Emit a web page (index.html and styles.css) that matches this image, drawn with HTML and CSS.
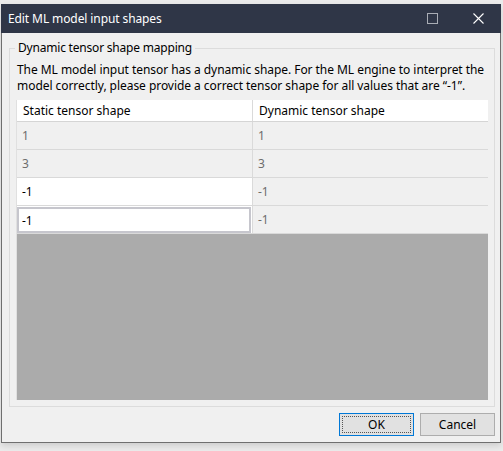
FILE: index.html
```html
<!DOCTYPE html>
<html>
<head>
<meta charset="utf-8">
<link rel="stylesheet" href="styles.css">
</head>
<body>
<div class="window">
  <div class="titlebar">
    <span class="title">Edit ML model input shapes</span>
    <div class="controls">
      <svg class="ctl max" width="11" height="11" viewBox="0 0 11 11"><rect x="0.5" y="0.5" width="10" height="10" fill="none" stroke="#a9adb5" stroke-width="1"/></svg>
      <svg class="ctl close" width="11" height="11" viewBox="0 0 11 11"><path d="M0.5 0.5 L10.5 10.5 M10.5 0.5 L0.5 10.5" stroke="#ffffff" stroke-width="1.1" fill="none"/></svg>
    </div>
  </div>
  <div class="content">
    <fieldset class="group">
      <legend class="legend">Dynamic tensor shape mapping</legend>
      <p class="desc">The ML model input tensor has a dynamic shape. For the ML engine to interpret the model correctly, please provide a correct tensor shape for all values that are “-1”.</p>
      <div class="grid">
        <div class="row head">
          <div class="cell left">Static tensor shape</div>
          <div class="cell right">Dynamic tensor shape</div>
        </div>
        <div class="row">
          <div class="cell left ro">1</div>
          <div class="cell right ro">1</div>
        </div>
        <div class="row">
          <div class="cell left ro">3</div>
          <div class="cell right ro">3</div>
        </div>
        <div class="row">
          <div class="cell left edit">-1</div>
          <div class="cell right ro">-1</div>
        </div>
        <div class="row">
          <div class="cell left edit focus"><span class="box">-1</span></div>
          <div class="cell right ro">-1</div>
        </div>
        <div class="empty"></div>
      </div>
    </fieldset>
    <div class="buttons">
      <button class="btn ok"><span class="focusring">OK</span></button>
      <button class="btn">Cancel</button>
    </div>
  </div>
</div>
</body>
</html>
```

FILE: styles.css
```css
html, body {
  margin: 0;
  padding: 0;
}
body {
  background: #ebebeb;
  width: 503px;
  height: 451px;
  overflow: hidden;
  font-family: "Noto Sans", "Segoe UI", sans-serif;
  font-size: 12px;
  color: #000;
}
.window {
  margin: 4px 0 0 1px;
  width: 500px;
  height: 439px;
  box-sizing: border-box;
  border: 1px solid #6f6f6f;
  border-top: none;
  background: #f0f0f0;
  display: flex;
  flex-direction: column;
  box-shadow: 0 3px 6px rgba(0,0,0,0.12);
}
.titlebar {
  height: 29px;
  margin: 0 -1px;
  background: #2f3647;
  display: flex;
  align-items: center;
  justify-content: space-between;
  padding-left: 7px;
  color: #fff;
  font-size: 12px;
}
.title {
  line-height: 16px;
  letter-spacing: -0.1px;
}
.controls {
  display: flex;
  align-items: center;
  gap: 35px;
  padding-right: 17px;
}
.ctl { display: block; }
.content {
  flex: 1;
  display: flex;
  flex-direction: column;
  padding: 7px 5px 0 7px;
}
.group {
  margin: 0;
  border: 1px solid #dcdcdc;
  padding: 0 5px 6px 6px;
  min-width: 0;
}
.legend {
  padding: 0 3px;
  margin-left: -1px;
  line-height: 16px;
  letter-spacing: -0.2px;
}
.desc {
  margin: 6px 0 6px 1px;
  line-height: 16px;
  width: 472px;
  letter-spacing: -0.05px;
}
.grid {
  width: 472px;
  border-left: 1px solid #e0e0e0;
  box-sizing: border-box;
  display: flex;
  flex-direction: column;
}
.row {
  display: flex;
  height: 28px;
  box-sizing: border-box;
  border-bottom: 1px solid #d9d9d9;
}
.row.head {
  height: 22px;
  background: #fff;
  border-bottom: 1px solid #d5d5d5;
}
.cell {
  display: flex;
  align-items: center;
  box-sizing: border-box;
  padding-left: 5px;
}
.cell.left {
  width: 236px;
  border-right: 1px solid #dadada;
}
.cell.right {
  flex: 1;
}
.head .cell { padding-left: 6px; }
.cell.ro {
  color: #6d6d6d;
  background: #f0f0f0;
}
.cell.edit {
  background: #fff;
}
.cell.focus {
  padding: 1px 1px 0 0;
  align-items: stretch;
}
.box {
  flex: 1;
  border: 2px solid #c6c6cd;
  background: #fff;
  display: flex;
  align-items: center;
  padding-left: 3px;
}
.empty {
  height: 166px;
  background: #ababab;
}
.buttons {
  display: flex;
  justify-content: flex-end;
  gap: 6px;
  margin-top: 6px;
}
.btn {
  width: 75px;
  height: 23px;
  box-sizing: border-box;
  border: 1px solid #adadad;
  background: #e1e1e1;
  font-family: "Noto Sans", "Segoe UI", sans-serif;
  font-size: 12px;
  color: #000;
  padding: 0;
  margin: 0;
}
.btn.ok {
  border: 1px solid #0078d7;
  padding: 2px;
}
.focusring {
  display: flex;
  align-items: center;
  justify-content: center;
  height: 100%;
  box-sizing: border-box;
  border: 1px dotted #555;
}
```
